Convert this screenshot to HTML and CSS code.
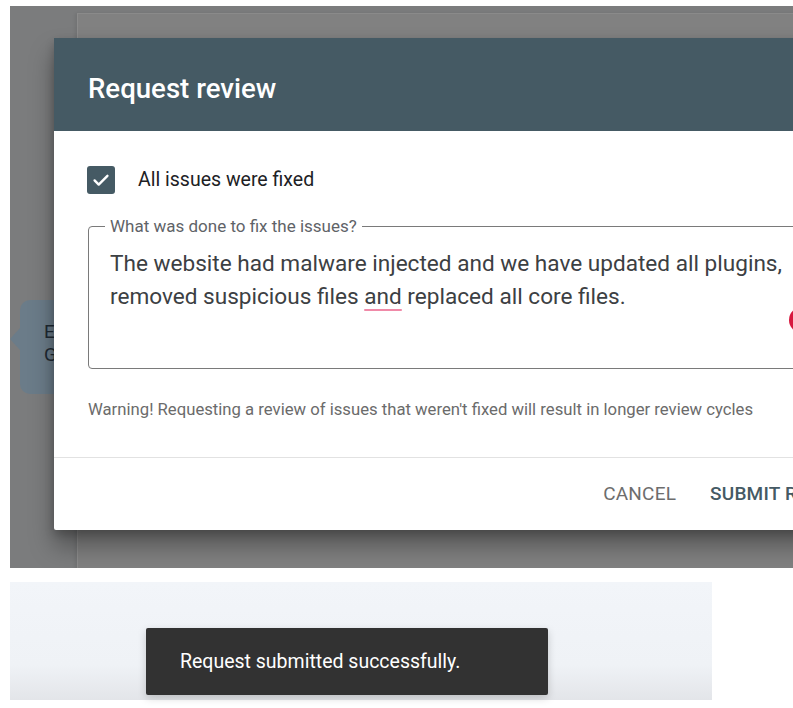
FILE: index.html
```html
<!DOCTYPE html>
<html>
<head>
<meta charset="utf-8">
<link rel="stylesheet" href="styles.css">
</head>
<body>
<div class="shot shot-dialog">
  <div class="under-card"></div>
  <div class="tip"><span>E</span><span>G</span></div>
  <div class="dialog">
    <div class="dialog-head"><h1>Request review</h1></div>
    <div class="dialog-body">
      <label class="check-row">
        <span class="checkbox">
          <svg viewBox="0 0 24 24" width="22" height="22"><path d="M5 12.5l4.5 4.5L19 7.5" fill="none" stroke="#fff" stroke-width="2.6" stroke-linecap="round" stroke-linejoin="round"/></svg>
        </span>
        <span class="check-label">All issues were fixed</span>
      </label>
      <fieldset class="field">
        <legend>What was done to fix the issues?</legend>
        <p class="field-text">The website had malware injected and we have updated all plugins, removed suspicious files <span class="spell">and</span> replaced all core files.</p>
        <span class="err-dot"></span>
      </fieldset>
      <p class="warning">Warning! Requesting a review of issues that weren't fixed will result in longer review cycles</p>
    </div>
    <div class="dialog-foot">
      <button class="btn btn-cancel">CANCEL</button>
      <button class="btn btn-submit">SUBMIT REVIEW</button>
    </div>
  </div>
</div>
<div class="shot shot-toast">
  <div class="toast">Request submitted successfully.</div>
</div>
</body>
</html>
```

FILE: styles.css
```css
* { box-sizing: border-box; }
html, body { margin: 0; padding: 0; background: #fff; overflow: hidden; }
body {
  font-family: Roboto, "Noto Sans", Arial, sans-serif;
  width: 793px;
  height: 708px;
}
.shot-dialog {
  position: relative;
  margin: 6px 0 0 10px;
  width: 783px;
  height: 562px;
  background: #7b7c7d;
  overflow: hidden;
  padding: 32px 0 0 44px;
}
.under-card {
  position: absolute;
  left: 67px;
  top: 7px;
  width: 800px;
  height: 600px;
  background: #818181;
  border-left: 1px solid #8c8c8c;
  border-top: 1px solid #8a8a8a;
  box-shadow: -2px 0 3px rgba(0,0,0,0.08);
}
.tip {
  position: absolute;
  left: 10px;
  top: 294px;
  width: 60px;
  height: 94px;
  background: #6b7c89;
  border-radius: 10px;
  display: flex;
  flex-direction: column;
  padding: 20px 0 0 24px;
  font-size: 19px;
  color: #1f2a33;
  line-height: 23px;
}
.tip::before {
  content: "";
  position: absolute;
  left: -10px;
  top: 28px;
  border-top: 11px solid transparent;
  border-bottom: 11px solid transparent;
  border-right: 10px solid #6b7c89;
}
.dialog {
  position: relative;
  width: 826px;
  height: 492px;
  background: #fff;
  border-radius: 2px;
  box-shadow: 0 16px 24px rgba(0,0,0,0.34), 0 4px 10px rgba(0,0,0,0.2);
  display: flex;
  flex-direction: column;
}
.dialog-head {
  height: 93px;
  background: #455a64;
  display: flex;
  align-items: center;
  padding: 8px 0 0 34px;
}
.dialog-head h1 {
  margin: 0;
  color: #fff;
  font-size: 27.6px;
  font-weight: 500;
}
.dialog-body {
  padding: 35px 0 0 33px;
  flex: 1;
}
.check-row {
  display: flex;
  align-items: center;
  gap: 23px;
}
.checkbox {
  width: 28px;
  height: 28px;
  border-radius: 3px;
  background: #455a64;
  display: flex;
  align-items: center;
  justify-content: center;
}
.check-label {
  font-size: 19.5px;
  color: #202124;
  margin-top: -1px;
}
.field {
  position: relative;
  margin: 23px 0 0 1px;
  padding: 12px 0 0 21px;
  height: 152px;
  border: 1.5px solid #7a7a7a;
  border-radius: 4px;
  min-width: 0;
}
.field legend {
  margin-left: -5px;
  padding: 0 5px;
  font-size: 17px;
  color: #5f6368;
  line-height: 18px;
}
.field-text {
  margin: 0;
  width: 700px;
  font-size: 22.6px;
  line-height: 33px;
  color: #3c4043;
}
.spell {
  text-decoration: underline;
  text-decoration-color: #f08aa8;
  text-decoration-thickness: 2px;
  text-underline-offset: 5px;
}
.err-dot {
  position: absolute;
  left: 700px;
  top: 72px;
  width: 26px;
  height: 26px;
  border-radius: 50%;
  background: #d7183e;
}
.warning {
  margin: 31px 0 0 1px;
  font-size: 16.7px;
  color: #6b6b6b;
}
.dialog-foot {
  height: 73px;
  border-top: 1px solid #e2e2e2;
  display: flex;
  align-items: center;
  justify-content: flex-end;
  gap: 34px;
  padding: 0 26px 2px 0;
}
.btn {
  border: 0;
  background: none;
  padding: 0;
  font-family: inherit;
  font-size: 19px;
  letter-spacing: 0.2px;
}
.btn-cancel { color: #6d6d6d; }
.btn-submit { color: #455a64; font-weight: 500; }
.shot-toast {
  margin: 14px 0 0 10px;
  width: 702px;
  height: 118px;
  background: linear-gradient(#f2f5f9 0%, #eff2f6 70%, #e3e5e9 100%);
  padding: 46px 0 0 136px;
}
.toast {
  width: 402px;
  height: 67px;
  background: #323232;
  border-radius: 2px;
  color: #fff;
  font-size: 19.5px;
  display: flex;
  align-items: center;
  padding-left: 34px;
  box-shadow: 0 3px 8px rgba(0,0,0,0.18);
}
```
